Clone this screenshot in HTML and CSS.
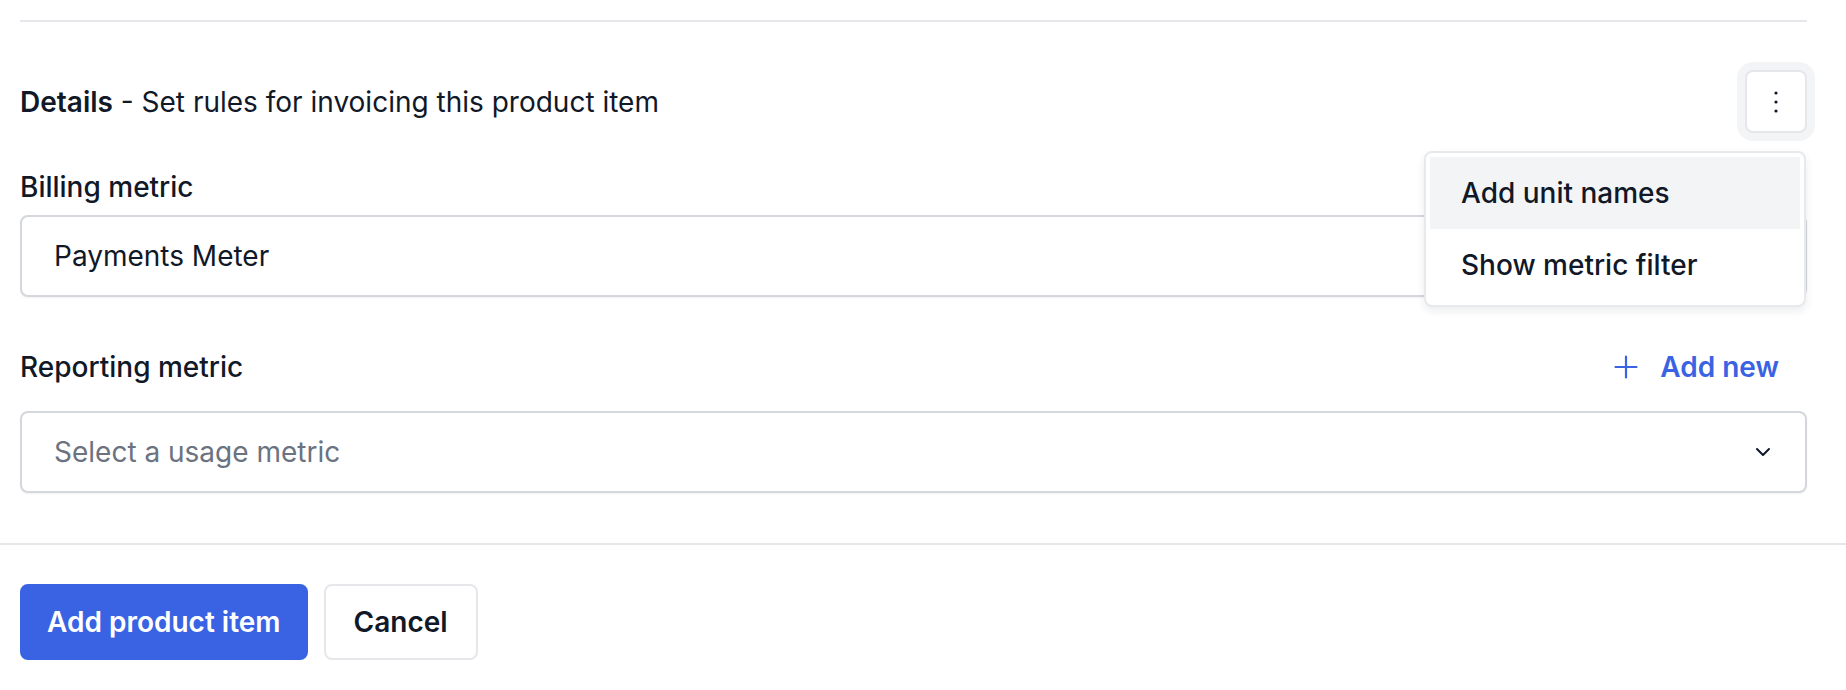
FILE: index.html
```html
<!DOCTYPE html>
<html lang="en">
<head>
<meta charset="utf-8">
<title>Details</title>
<link rel="stylesheet" href="styles.css">
</head>
<body>
<div class="page">
  <div class="section">
    <div class="top-rule"></div>
    <div class="header">
      <p class="title"><strong>Details</strong> - Set rules for invoicing this product item</p>
      <div class="kebab-wrap">
        <button class="kebab" type="button" aria-label="More options">
          <svg width="6" height="26" viewBox="0 0 6 26"><circle cx="3" cy="4" r="1.6" fill="#111827"/><circle cx="3" cy="13" r="1.6" fill="#111827"/><circle cx="3" cy="22" r="1.6" fill="#111827"/></svg>
        </button>
        <div class="menu">
          <div class="menu-item active">Add unit names</div>
          <div class="menu-item">Show metric filter</div>
        </div>
      </div>
    </div>

    <div class="field">
      <div class="label-row"><span class="label">Billing metric</span></div>
      <div class="input"><span class="value">Payments Meter</span></div>
    </div>

    <div class="field field-second">
      <div class="label-row with-action">
        <span class="label">Reporting metric</span>
        <button class="add-new" type="button">
          <svg width="24" height="24" viewBox="0 0 24 24"><path d="M12 1.5v21M1.5 12h21" stroke="#3a63e3" stroke-width="2.2" fill="none" stroke-linecap="round"/></svg>
          <span>Add new</span>
        </button>
      </div>
      <div class="input select">
        <span class="placeholder">Select a usage metric</span>
        <svg width="16" height="10" viewBox="0 0 16 10"><path d="M2 2l6 6 6-6" stroke="#111827" stroke-width="2" fill="none" stroke-linecap="round" stroke-linejoin="round"/></svg>
      </div>
    </div>
  </div>

  <div class="footer">
    <button class="btn btn-primary" type="button">Add product item</button>
    <button class="btn btn-secondary" type="button">Cancel</button>
  </div>
</div>
</body>
</html>
```

FILE: styles.css
```css
* { box-sizing: border-box; }

html, body {
  margin: 0;
  padding: 0;
  background: #ffffff;
}

body {
  font-family: Inter, "Noto Sans", "Liberation Sans", sans-serif;
  font-size: 28px;
  color: #111827;
  width: 1846px;
  height: 690px;
  overflow: hidden;
}

.section {
  padding: 20px 39px 0 20px;
}

.top-rule {
  height: 2px;
  background: #e5e7eb;
}

.header {
  margin-top: 48px;
  height: 63px;
  display: flex;
  align-items: center;
  justify-content: space-between;
}

.title {
  margin: 0;
  font-size: 28px;
  line-height: 36px;
  font-weight: 400;
  color: #111827;
}

.title strong {
  font-weight: 600;
}

.kebab-wrap {
  position: relative;
  width: 62px;
  height: 63px;
}

.kebab {
  width: 62px;
  height: 63px;
  padding: 0;
  margin: 0;
  display: flex;
  align-items: center;
  justify-content: center;
  background: #ffffff;
  border: 2px solid #e5e7eb;
  border-radius: 8px;
  box-shadow: 0 0 0 8px #f3f4f6;
  cursor: pointer;
}

.menu {
  position: absolute;
  top: 81px;
  right: 1px;
  width: 382px;
  padding: 4px;
  background: #ffffff;
  border: 2px solid #e8e9ec;
  border-radius: 8px;
  box-shadow: 0 4px 8px rgba(17, 24, 39, 0.08);
  z-index: 10;
}

.menu-item {
  height: 72px;
  display: flex;
  align-items: center;
  padding-left: 31px;
  font-size: 28px;
  font-weight: 500;
  color: #111827;
}

.menu-item.active {
  background: #f3f4f6;
}

.field {
  margin-top: 36px;
}

.field-second {
  margin-top: 42px;
}

.label-row {
  display: flex;
  align-items: center;
  justify-content: space-between;
  height: 36px;
  margin-bottom: 10px;
}

.label-row.with-action {
  height: 56px;
  margin-bottom: 16px;
}

.label {
  font-size: 28px;
  font-weight: 500;
  line-height: 36px;
  color: #111827;
}

.add-new {
  display: flex;
  align-items: center;
  gap: 22px;
  height: 56px;
  padding: 0 28px 0 0;
  margin: 0;
  background: transparent;
  border: none;
  font-family: inherit;
  font-size: 28px;
  font-weight: 600;
  color: #3a63e3;
  cursor: pointer;
}

.input {
  height: 82px;
  display: flex;
  align-items: center;
  justify-content: space-between;
  padding: 0 34px 0 32px;
  border: 2px solid #d4d7dc;
  border-radius: 8px;
  background: #ffffff;
  box-shadow: 0 1px 2px rgba(17, 24, 39, 0.06);
}

.value {
  color: #111827;
  font-size: 28px;
}

.placeholder {
  color: #6b7280;
  font-size: 28px;
}

.footer {
  margin-top: 50px;
  border-top: 2px solid #e5e7eb;
  padding: 39px 20px 0;
  display: flex;
  gap: 16px;
}

.btn {
  height: 76px;
  padding: 0 25px;
  border-radius: 8px;
  font-family: inherit;
  font-size: 28px;
  font-weight: 600;
  cursor: pointer;
}

.btn-primary {
  background: #3a63e3;
  color: #ffffff;
  border: 2px solid #3a63e3;
}

.btn-secondary {
  background: #ffffff;
  color: #111827;
  border: 2px solid #e5e7eb;
  padding: 0 28px;
}
```
